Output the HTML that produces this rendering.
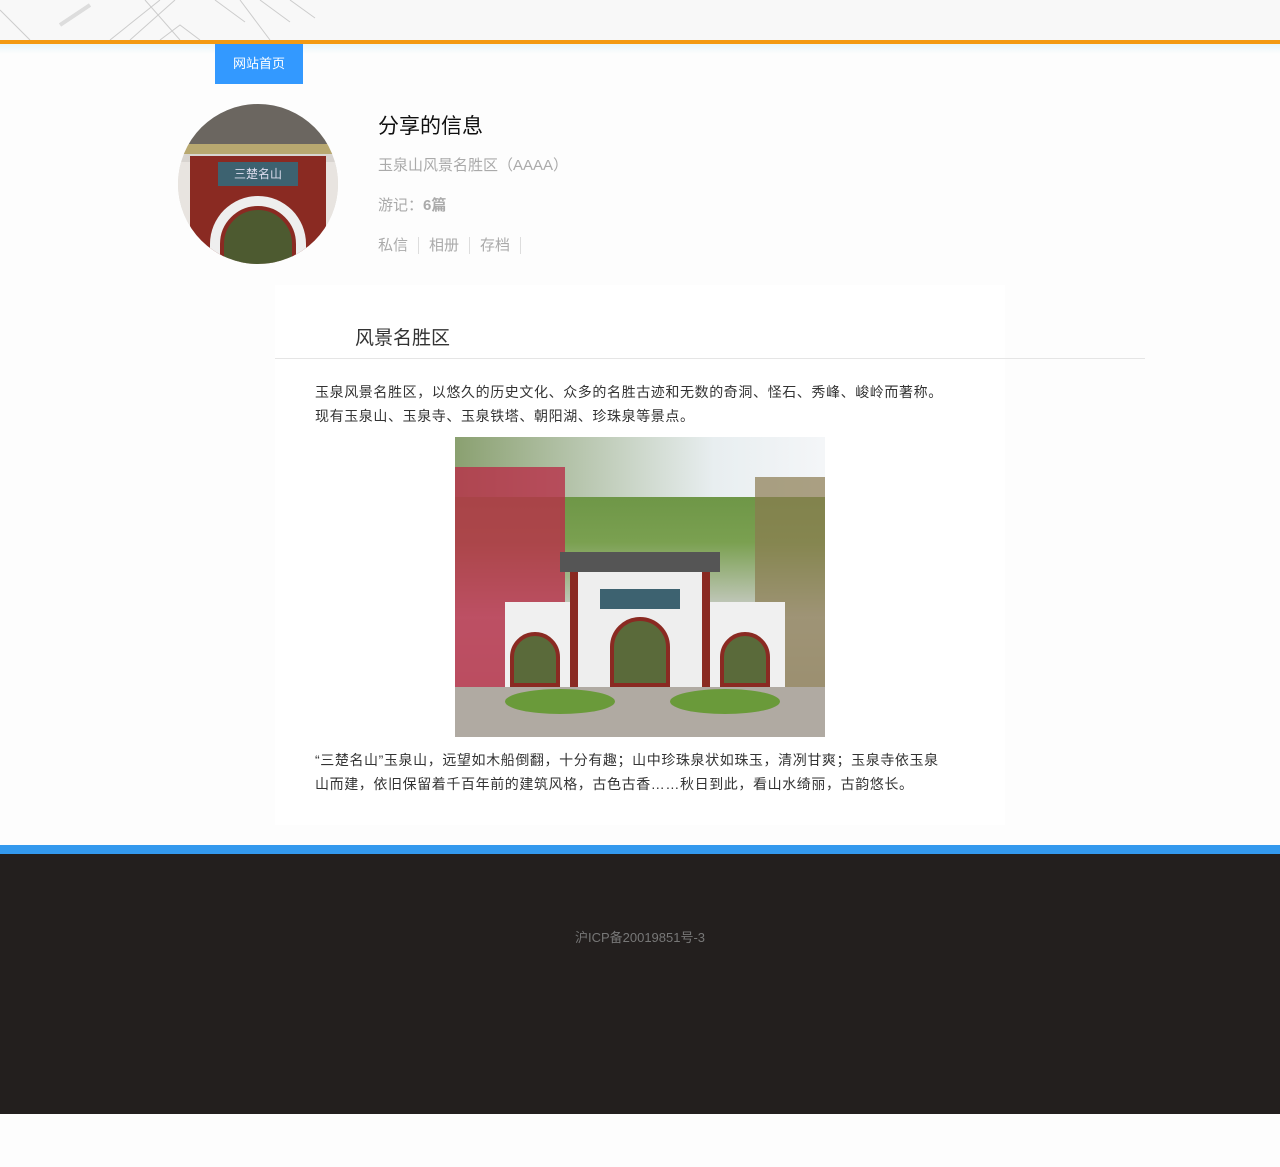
<!DOCTYPE html>
<html><head><meta charset="utf-8"><style>
*{margin:0;padding:0;box-sizing:border-box}
body{width:1280px;height:1167px;background:#fdfdfd;font-family:"Liberation Sans","Noto Sans CJK SC",sans-serif;position:relative;overflow:hidden}
.top{position:absolute;left:0;top:0;width:1280px;height:40px;background:#f8f8f8}
.orange{position:absolute;left:0;top:40px;width:1280px;height:4px;background:#f39a12}
.glow{position:absolute;left:0;top:44px;width:1280px;height:10px;background:linear-gradient(#e8f6f8,#fdfdfd)}
.nav{position:absolute;left:215px;top:44px;width:88px;height:40px;background:#3399ff;color:#fff;font-size:13px;line-height:40px;text-align:center}
.av{position:absolute;left:178px;top:104px;width:160px;height:160px;border-radius:50%;overflow:hidden;background:#d8d4d0}
.t1{position:absolute;left:378px;top:110px;font-size:21px;color:#111}
.t2{position:absolute;left:378px;top:154px;font-size:15px;color:#aaa}
.t3{position:absolute;left:378px;top:194px;font-size:15px;color:#aaa}
.t4{position:absolute;left:378px;top:234px;font-size:15px;color:#aaa}
.t4 span{padding:0 10px;border-right:1px solid #ddd}
.t4 span:first-child{padding-left:0}
.card{position:absolute;left:275px;top:285px;width:730px;height:540px;background:#fff}
.h{position:absolute;left:355px;top:323px;font-size:19px;color:#333}
.line{position:absolute;left:275px;top:358px;width:870px;height:1px;background:#e5e5e5}
.p{position:absolute;left:315px;width:680px;font-size:14px;line-height:24px;color:#333;letter-spacing:0.6px}
.img{position:absolute;left:455px;top:437px;width:370px;height:300px;overflow:hidden;background:linear-gradient(#5f8a3c,#7aa050 35%,#cfcfcf 60%,#bdb8b0)}
.blue{position:absolute;left:0;top:845px;width:1280px;height:9px;background:#3399ee}
.foot{position:absolute;left:0;top:854px;width:1280px;height:260px;background:#231f1e;color:#777;font-size:13px;text-align:center;padding-top:73px}
</style></head><body>
<div class="top"><svg width="600" height="40" style="position:absolute;left:0;top:0"><g stroke="#ccc" fill="none"><path d="M0 10L30 40M110 40L160 0M130 40L175 0M180 40L145 0M215 0L245 22M240 0L270 40M260 0L290 22M290 0L315 18"/><path d="M160 40L180 25L200 40" /></g><path d="M60 25L90 5" stroke="#ddd" stroke-width="4"/></svg></div>
<div class="orange"></div><div class="glow"></div>
<div class="nav">网站首页</div>
<div class="av">
<div style="position:absolute;left:0;top:0;width:160px;height:40px;background:#6b6660"></div>
<div style="position:absolute;left:0;top:40px;width:160px;height:10px;background:#b8a870"></div>
<div style="position:absolute;left:12px;top:52px;width:136px;height:130px;background:#8a2a22"></div>
<div style="position:absolute;left:40px;top:58px;width:80px;height:24px;background:#3d6270;color:#dde;font-size:12px;line-height:24px;text-align:center">三楚名山</div>
<div style="position:absolute;left:0;top:58px;width:12px;height:110px;background:#e8e4e0"></div>
<div style="position:absolute;left:148px;top:58px;width:12px;height:110px;background:#e8e4e0"></div>
<div style="position:absolute;left:32px;top:92px;width:96px;height:90px;border-radius:48px 48px 0 0;background:#eee"></div>
<div style="position:absolute;left:42px;top:102px;width:76px;height:80px;border-radius:38px 38px 0 0;background:#4d5a30;border:4px solid #8a2a22"></div>
</div>
<div class="t1">分享的信息</div>
<div class="t2">玉泉山风景名胜区（AAAA）</div>
<div class="t3">游记：<b>6篇</b></div>
<div class="t4"><span>私信</span><span>相册</span><span>存档</span></div>
<div class="card"></div>
<div class="h">风景名胜区</div>
<div class="line"></div>
<div class="p" style="top:380px">玉泉风景名胜区，以悠久的历史文化、众多的名胜古迹和无数的奇洞、怪石、秀峰、峻岭而著称。<br>现有玉泉山、玉泉寺、玉泉铁塔、朝阳湖、珍珠泉等景点。</div>
<div class="img">
<div style="position:absolute;left:0;top:0;width:370px;height:60px;background:linear-gradient(90deg,#8aa070,#e8eef0 70%,#f4f6f8)"></div>
<div style="position:absolute;left:0;top:30px;width:110px;height:220px;background:#b83048;opacity:.8"></div>
<div style="position:absolute;left:300px;top:40px;width:70px;height:210px;background:#8a7a50;opacity:.7"></div>
<div style="position:absolute;left:105px;top:115px;width:160px;height:20px;background:#555"></div>
<div style="position:absolute;left:50px;top:165px;width:280px;height:85px;background:#f0f0f0"></div>
<div style="position:absolute;left:115px;top:135px;width:140px;height:115px;background:#eee;border-left:8px solid #8a2a22;border-right:8px solid #8a2a22"></div>
<div style="position:absolute;left:145px;top:152px;width:80px;height:20px;background:#3d6270"></div>
<div style="position:absolute;left:155px;top:180px;width:60px;height:70px;border-radius:30px 30px 0 0;background:#5a6a3a;border:4px solid #8a2a22"></div>
<div style="position:absolute;left:55px;top:195px;width:50px;height:55px;border-radius:25px 25px 0 0;background:#5a6a3a;border:4px solid #8a2a22"></div>
<div style="position:absolute;left:265px;top:195px;width:50px;height:55px;border-radius:25px 25px 0 0;background:#5a6a3a;border:4px solid #8a2a22"></div>
<div style="position:absolute;left:0;top:250px;width:370px;height:50px;background:#b0aaa2"></div>
<div style="position:absolute;left:50px;top:252px;width:110px;height:25px;background:#6a9a3a;border-radius:50%"></div>
<div style="position:absolute;left:215px;top:252px;width:110px;height:25px;background:#6a9a3a;border-radius:50%"></div>
</div>
<div class="p" style="top:748px">“三楚名山”玉泉山，远望如木船倒翻，十分有趣；山中珍珠泉状如珠玉，清冽甘爽；玉泉寺依玉泉<br>山而建，依旧保留着千百年前的建筑风格，古色古香……秋日到此，看山水绮丽，古韵悠长。</div>
<div class="blue"></div>
<div class="foot">沪ICP备20019851号-3</div>
</body></html>
